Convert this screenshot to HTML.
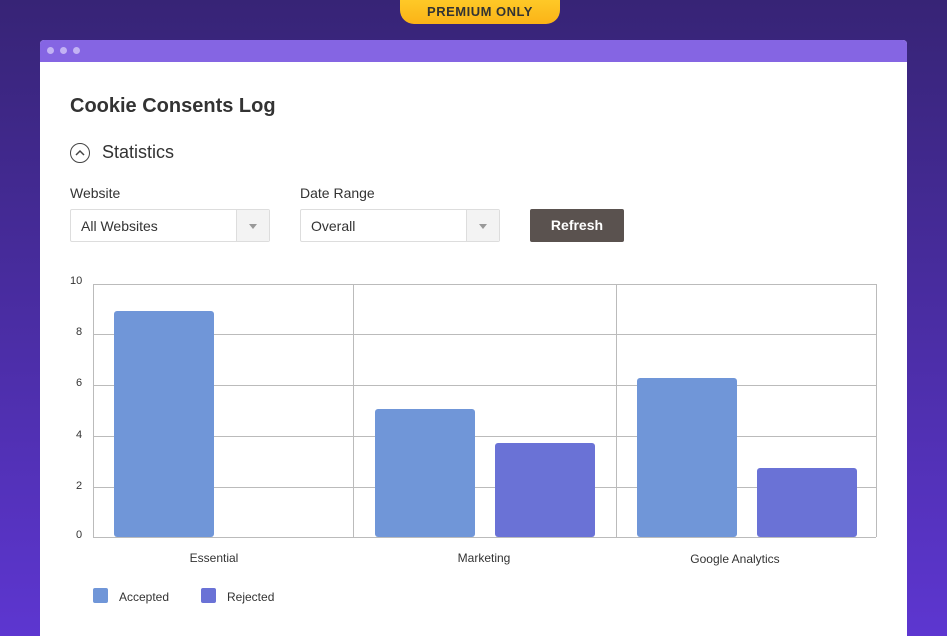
<!DOCTYPE html><html><head><style>
html,body{margin:0;width:947px;height:636px;overflow:hidden}
body{background:linear-gradient(#372476,#5d36d0);font-family:"Liberation Sans",sans-serif;position:relative}
.badge{position:absolute;left:400px;top:-10px;width:160px;height:34px;border-radius:0 0 14px 14px;background:linear-gradient(#ffd22e,#fbb317);color:#333;font-weight:bold;font-size:13px;text-align:center;line-height:44px;letter-spacing:.5px}
.win{position:absolute;left:40px;top:40px;width:867px;height:596px;background:#fff;border-radius:4px 4px 0 0;overflow:hidden}
.bar{height:22px;background:#8565e3;position:relative}
.dot{position:absolute;top:7px;width:7px;height:7px;border-radius:50%;background:#c2b2f4}
h1{position:absolute;left:30px;top:55px;margin:0;font-size:20px;color:#333;font-weight:bold}
.stat{position:absolute;left:30px;top:102px;font-size:18px;color:#333;display:flex;align-items:center}
.stat span{width:18px;height:18px;border:1.5px solid #444;border-radius:50%;margin-right:12px;display:inline-block;position:relative}
.lbl{position:absolute;top:145px;font-size:14px;color:#333}
.sel{position:absolute;top:169px;width:198px;height:31px;border:1px solid #ddd;border-radius:2px;font-size:14px;color:#333;line-height:32px;box-sizing:content-box}
.sel i{position:absolute;right:0;top:0;width:32px;height:31px;background:#f3f3f3;border-left:1px solid #ddd}
.sel i:after{content:"";position:absolute;left:12px;top:14px;border:4px solid transparent;border-top:5px solid #999}
.btn{position:absolute;left:490px;top:169px;width:94px;height:33px;background:#5a524f;border-radius:2px;color:#fff;font-weight:bold;font-size:14px;text-align:center;line-height:33px}
</style></head><body>
<div class="badge">PREMIUM ONLY</div>
<div class="win">
<div class="bar"><div class="dot" style="left:7px"></div><div class="dot" style="left:20px"></div><div class="dot" style="left:33px"></div></div>
<h1>Cookie Consents Log</h1>
<div class="stat"><span><svg width="18" height="18" style="position:absolute;left:0;top:0"><path d="M5 11 L9 7 L13 11" fill="none" stroke="#444" stroke-width="1.5"/></svg></span>Statistics</div>
<div class="lbl" style="left:30px">Website</div>
<div class="lbl" style="left:260px">Date Range</div>
<div class="sel" style="left:30px"><span style="padding-left:10px">All Websites</span><i></i></div>
<div class="sel" style="left:260px"><span style="padding-left:10px">Overall</span><i></i></div>
<div class="btn">Refresh</div>
</div>
<svg style="position:absolute;left:0;top:0" width="947" height="636" font-family="Liberation Sans" font-size="11" fill="#333">
<g stroke="#bbb" stroke-width="1">
<line x1="93" y1="284.5" x2="876" y2="284.5"/><line x1="93" y1="334.5" x2="876" y2="334.5"/><line x1="93" y1="385.5" x2="876" y2="385.5"/><line x1="93" y1="436.5" x2="876" y2="436.5"/><line x1="93" y1="487.5" x2="876" y2="487.5"/><line x1="93" y1="537.5" x2="876" y2="537.5"/>
<line x1="93.5" y1="284" x2="93.5" y2="537"/><line x1="353.5" y1="284" x2="353.5" y2="537"/><line x1="616.5" y1="284" x2="616.5" y2="537"/><line x1="876.5" y1="284" x2="876.5" y2="537"/>
</g>
<text x="70" y="284">10</text><text x="76" y="335">8</text><text x="76" y="386">6</text><text x="76" y="438">4</text><text x="76" y="489">2</text><text x="76" y="538">0</text>
<rect x="114" y="311" width="100" height="226" rx="3" fill="#7096d8"/>
<rect x="375" y="409" width="100" height="128" rx="3" fill="#7096d8"/>
<rect x="495" y="443" width="100" height="94" rx="3" fill="#6a72d6"/>
<rect x="637" y="378" width="100" height="159" rx="3" fill="#7096d8"/>
<rect x="757" y="468" width="100" height="69" rx="3" fill="#6a72d6"/>
<text x="214" y="562" text-anchor="middle" font-size="12">Essential</text>
<text x="484" y="562" text-anchor="middle" font-size="12">Marketing</text>
<text x="735" y="563" text-anchor="middle" font-size="12">Google Analytics</text>
<rect x="93" y="588" width="15" height="15" rx="2" fill="#7096d8"/><text x="119" y="601" font-size="12">Accepted</text>
<rect x="201" y="588" width="15" height="15" rx="2" fill="#6a72d6"/><text x="227" y="601" font-size="12">Rejected</text>
</svg>
</body></html>
